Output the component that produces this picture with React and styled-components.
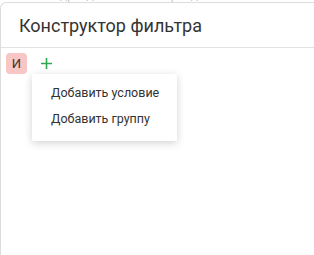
import React from 'react';
import styled, { createGlobalStyle } from 'styled-components';

const GlobalStyle = createGlobalStyle`
    html, body {
        margin: 0;
        padding: 0;
        background: #fff;
        overflow: hidden;
        font-family: Roboto, "Noto Sans", sans-serif;
    }
`;

const BackdropStrip = styled.div`
    height: 2px;
    overflow: hidden;
    position: relative;
`;

const BackdropText = styled.div`
    display: flex;
    gap: 22px;
    padding-left: 45px;
    margin-top: -12px;
    font-size: 12px;
    line-height: 14px;
    color: #c8c8c8;
`;

const Dialog = styled.div`
    width: 340px;
    height: 253px;
    border-left: 1px solid #dcdcdc;
    border-top: 1px solid #dcdcdc;
    border-top-left-radius: 6px;
    background: #fff;
    box-sizing: border-box;
`;

const Header = styled.div`
    height: 44px;
    display: flex;
    align-items: center;
    padding-left: 18px;
    border-bottom: 1px solid #e2e2e2;
    font-size: 18px;
    color: #333;
`;

const Body = styled.div`
    padding: 5px;
`;

const Row = styled.div`
    position: relative;
    display: flex;
    align-items: center;
    gap: 9px;
    height: 21px;
`;

const Operator = styled.div`
    width: 21px;
    height: 21px;
    border-radius: 4px;
    background: #f9c6c6;
    color: #333;
    font-size: 13px;
    display: flex;
    align-items: center;
    justify-content: center;
`;

const AddButton = styled.div`
    width: 20px;
    height: 21px;
    display: flex;
    align-items: center;
    justify-content: center;
`;

const Menu = styled.div`
    position: absolute;
    top: 21px;
    left: 26px;
    width: 145px;
    padding: 6px 0 9px;
    background: #fff;
    box-shadow: 0 2px 8px rgba(0, 0, 0, 0.18);
`;

const MenuItem = styled.div`
    height: 26px;
    line-height: 26px;
    padding-left: 19px;
    font-size: 12.5px;
    color: #333;
    white-space: nowrap;
`;

const App = () => {
    return (
        <>
            <GlobalStyle />
            <BackdropStrip>
                <BackdropText>
                    <span>Подразделение</span>
                    <span>Период сезона</span>
                </BackdropText>
            </BackdropStrip>
            <Dialog>
                <Header>Конструктор фильтра</Header>
                <Body>
                    <Row>
                        <Operator>И</Operator>
                        <AddButton>
                            <svg width="11" height="11" viewBox="0 0 11 11">
                                <path d="M5.5 0v11M0 5.5h11" stroke="#2fa84f" strokeWidth="1.6" />
                            </svg>
                        </AddButton>
                        <Menu>
                            <MenuItem>Добавить условие</MenuItem>
                            <MenuItem>Добавить группу</MenuItem>
                        </Menu>
                    </Row>
                </Body>
            </Dialog>
        </>
    );
};

export default App;
